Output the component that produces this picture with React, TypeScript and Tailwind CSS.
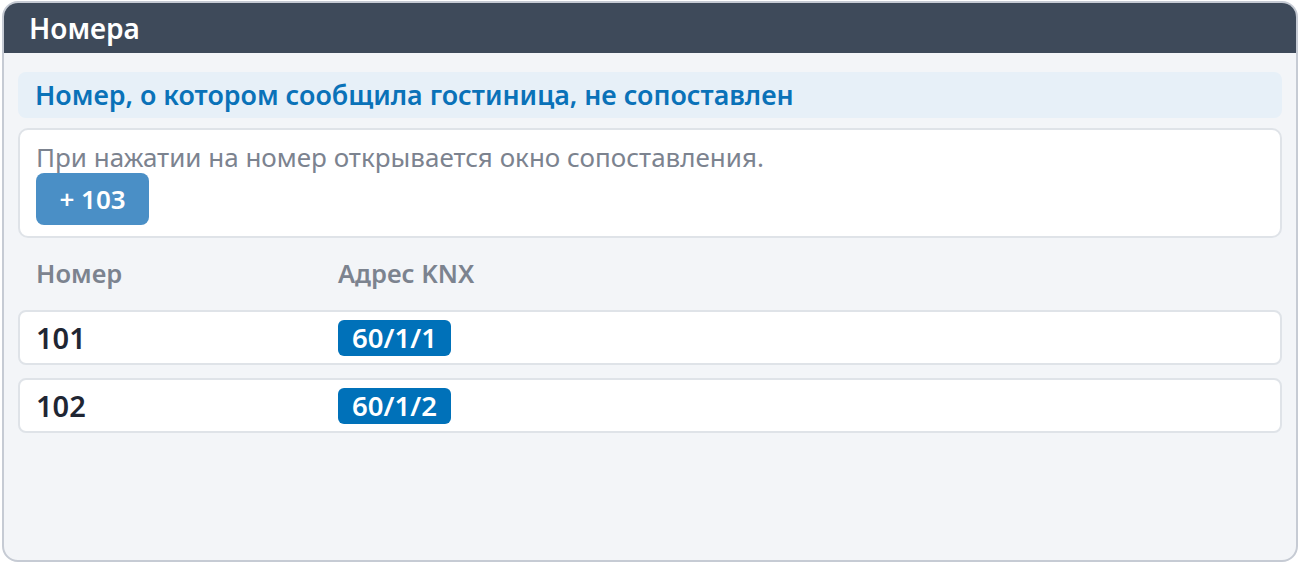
export default function App() {
  const rows = [
    { num: "101", knx: "60/1/1" },
    { num: "102", knx: "60/1/2" },
  ];
  return (
    <div
      className="w-[1300px] h-[564px] bg-white pt-[1px] px-[2px] pb-[2px]"
      style={{ fontFamily: '"Noto Sans", "Open Sans", sans-serif' }}
    >
      <div className="h-full flex flex-col rounded-[16px] border-2 border-[#c6cbd4] bg-[#f3f5f8] overflow-hidden">
        <div className="h-[50px] shrink-0 bg-[#3e4a5a] flex items-center px-[25px]">
          <span className="text-white text-[28px] font-semibold leading-none">Номера</span>
        </div>
        <div className="flex flex-col px-[14px] pt-[19px]">
          <div className="h-[46px] rounded-[8px] bg-[#e7f0f8] flex items-center px-[17px]">
            <span className="text-[#0a72b8] text-[26.8px] font-semibold leading-none">
              Номер, о котором сообщила гостиница, не сопоставлен
            </span>
          </div>
          <div className="mt-[10px] h-[110px] rounded-[10px] border-2 border-[#dfe3e8] bg-white px-[16px] pt-[12px] flex flex-col items-start">
            <div className="text-[26px] leading-[30px] text-[#7c838f]">
              При нажатии на номер открывается окно сопоставления.
            </div>
            <button className="mt-[1px] h-[52px] w-[113px] rounded-[8px] bg-[#4a8fc6] text-white text-[26px] font-semibold leading-none flex items-center justify-center">
              + 103
            </button>
          </div>
          <div className="h-[72px] grid grid-cols-[302px_1fr] items-center px-[18px]">
            <span className="text-[25.5px] leading-none font-semibold text-[#7c838f]">Номер</span>
            <span className="text-[25.5px] leading-none font-semibold text-[#7c838f]">Адрес KNX</span>
          </div>
          <div className="flex flex-col gap-[13px]">
            {rows.map((r) => (
              <div
                key={r.num}
                className="h-[55px] rounded-[8px] border-2 border-[#dfe3e8] bg-white grid grid-cols-[302px_1fr] items-center px-[16px]"
              >
                <span className="text-[29px] leading-none font-semibold text-[#1f2633]">{r.num}</span>
                <div className="flex">
                  <span className="inline-flex h-[36px] w-[113px] items-center justify-center rounded-[6px] bg-[#0071b9] text-white text-[27.5px] leading-none font-semibold">
                    {r.knx}
                  </span>
                </div>
              </div>
            ))}
          </div>
        </div>
      </div>
    </div>
  );
}
